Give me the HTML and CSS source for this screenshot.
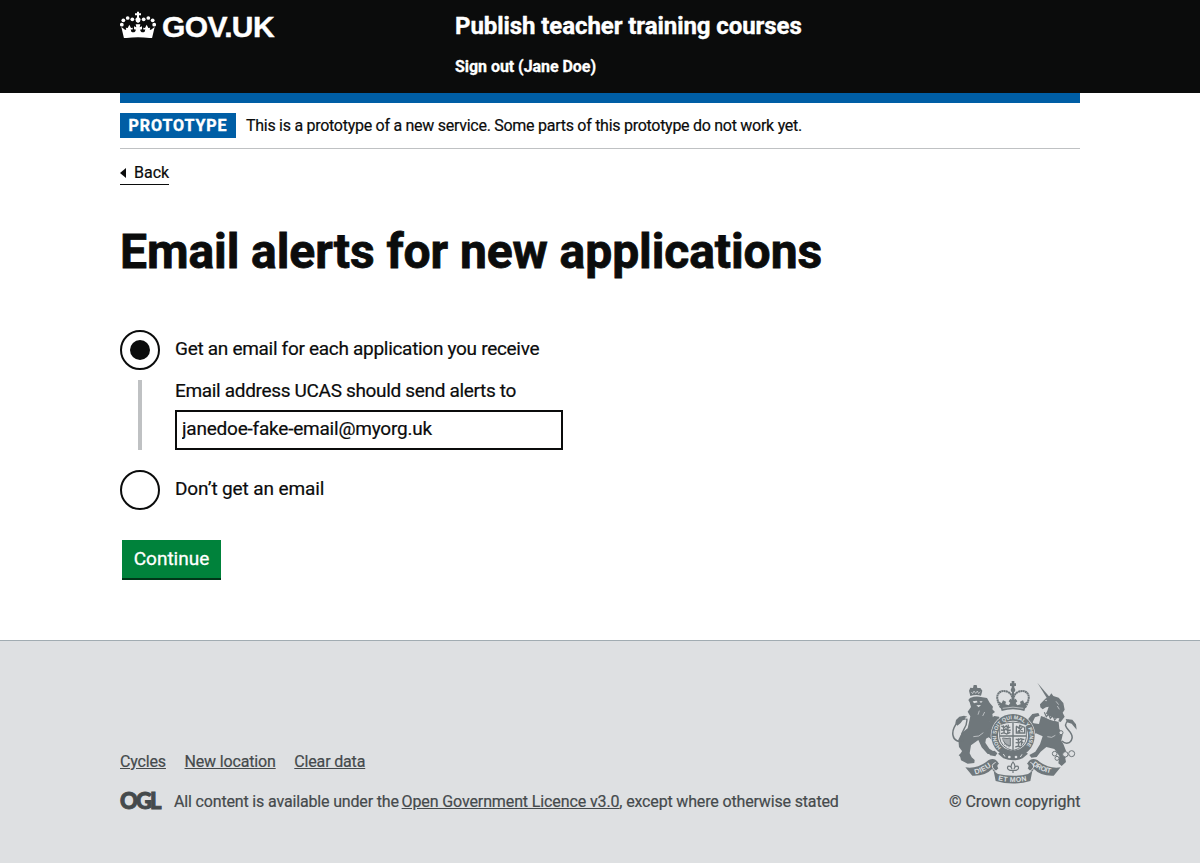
FILE: index.html
```html
<!DOCTYPE html>
<html lang="en">
<head>
<meta charset="utf-8">
<title>Email alerts for new applications</title>
<link rel="stylesheet" href="styles.css">
</head>
<body>
<header class="header">
  <div class="wrap header-grid">
    <a class="logo" href="#">
      <svg class="logo-crown" viewBox="30 35 108 79" aria-hidden="true">
        <defs>
          <g id="crown-half">
            <circle cx="67" cy="59" r="5.6"/><circle cx="53" cy="55" r="5.6"/><circle cx="40" cy="62" r="5.6"/><circle cx="35.5" cy="75" r="5.6"/>
            <path d="M34 82l12 9 3-2-2-5 6 1 5-10 5 10 6-1-2 6-5-1 2 7q6 3 11 0l3-6-6-1v-9l7 3-2-9h7v39q-22 0-42 3z"/>
          </g>
        </defs>
        <g fill="#fff">
          <path d="M81 36h6v5h6v6h-6v6l5 5-2 8-6 4-6-4-2-8 5-5v-6h-6v-6h6z"/>
          <use href="#crown-half"/>
          <use href="#crown-half" transform="translate(168) scale(-1 1)"/>
        </g>
      </svg>
      <span class="logo-text">GOV.UK</span>
    </a>
    <div>
      <a class="service-name" href="#">Publish teacher training courses</a>
      <a class="sign-out" href="#">Sign out (Jane Doe)</a>
    </div>
  </div>
</header>

<main class="wrap main">
  <div class="phase-banner">
    <strong class="phase-tag">PROTOTYPE</strong>
    <span class="phase-text">This is a prototype of a new service. Some parts of this prototype do not work yet.</span>
  </div>
  <a class="back" href="#">Back</a>
  <h1 class="title">Email alerts for new applications</h1>
  <form>
    <label class="radio"><span class="radio-ring radio-on"></span><span class="radio-label label-get">Get an email for each application you receive</span></label>
    <div class="conditional">
      <label class="field-label" for="email">Email address UCAS should send alerts to</label>
      <input class="field" id="email" type="text" value="janedoe-fake-email@myorg.uk">
    </div>
    <label class="radio"><span class="radio-ring"></span><span class="radio-label label-none">Don’t get an email</span></label>
    <button class="button" type="button">Continue</button>
  </form>
</main>

<footer class="footer">
  <div class="wrap footer-grid">
    <div class="footer-meta">
      <nav class="footer-links"><a href="#">Cycles</a><a href="#">New location</a><a href="#">Clear data</a></nav>
      <div class="licence"><span class="ogl">OGL</span><span class="licence-text">All content is available under the <a href="#">Open Government Licence v3.0</a>, except where otherwise stated</span></div>
    </div>
    <div class="copyright">
      <svg class="arms" viewBox="30 30 390 312" aria-hidden="true">
        <defs>
          <path id="motto" d="M185 234A50 50 0 1 1 253 234"/>
          <path id="dieu" d="M106 313Q135 306 160 285"/>
          <path id="mon" d="M174 331Q219 341 264 331"/>
          <path id="droit" d="M276 284Q302 306 338 311"/>
        </defs>
        <g fill="#6f777b">
          <!-- Lion -->
          <path d="M91 78l-4-16 4-9 8 1 2-9h9l2 9 9 0 6 8-4 15q-16-4-32 1z"/>
          <path d="M92 83q17-6 35-1l14 2 8 14 10 12-2 8 8 8-8 6 2 12-10 10 10 10 2 28-6 16-9-6-8 4-2 12 12 18 12 8-1 8h-16l-18-20-10-22-22 16-4 24 6 12 9 8-1 9-20 2-20-10-3-14 6-14-9-12-2-22 10-20 18-14 8-36-8-14 10-14-4-14-4-7 5-6z"/>
          <path d="M145 150l18-12 14 2 4 10-14 6-8 14zM143 178l20-6 10 10-2 28 10 10-3 7-13-2-10-14-10-14z"/>
          <path d="M46 160l2-10 10-10 14-3 10 3-8 4 6 4-12 3-6 8-10 8zM56 256l10-10 12 8-8 14zM144 245l20-3 8 8-6 9-16-3z"/>
          <!-- Unicorn -->
          <path d="M292 38l36 42-7 5z"/>
          <path d="M300 103l16-17 13-9 5-7 6 8 16 5 14 16 4 20-6 9 6 12-12 16-50-16 10-18 4-12-8 2-10 6-7-6z"/>
          <path d="M303 138l53 18 2 20 10 18-4 18 6 10 8 20-4 14 4 20-13 12-10-8 3-22-15-21-24-6-17 14-12 16-16 2-6-8 18-10 14-22 8-24-22-10-12-20-16-4-5-12 14-5 14 12 16 2z"/>
          <path d="M264 148l13-16 18-3 4 8-14 5-8 16zM274 180l24-5 8 8-18 5-10 14-7-8zM377 147l20 2 11 14 2 16-7-8-8-10-14-4z"/>
        </g>
        <g fill="none" stroke="#6f777b" stroke-width="4.5">
          <path d="M56 152c-12 14-20 30-17 44 3 17 18 22 32 14M80 146c6 24-20 38-16 58M386 150c-28 24 16 31 10 55-4 17-20 18-30 8"/>
        </g>
        <path d="M362 262q14 4 24-8" fill="none" stroke="#6f777b" stroke-width="3"/>
        <g fill="#dee0e2" stroke="#6f777b" stroke-width="3">
          <circle cx="344" cy="251" r="7"/><circle cx="351" cy="265" r="6"/><circle cx="363" cy="188" r="6"/><circle cx="376" cy="253" r="8"/><circle cx="395" cy="251" r="9"/>
        </g>
        <path d="M312 126q22 20 46 19l-3 9q-28 0-47-18z" fill="#dee0e2"/>
        <path d="M313 127l6 13 7-8 5 13 8-8 5 13 8-10" fill="none" stroke="#6f777b" stroke-width="3.5"/>
        <path d="M98 94l12-2 3 5-11 3zM118 94l10 0-5 5zM109 106l14-1-7 7zM314 92l7-3-2 5z" fill="#dee0e2"/>
        <path d="M94 66l4 5 4-8 5 7 5-7 4 8 5-6M118 122l-4 12M134 126l-6 12M100 200q18 2 30-12M348 94l8 10M352 108l6 10M322 200q14 6 24-4" fill="none" stroke="#dee0e2" stroke-width="2"/>
        <!-- Crown -->
        <g fill="none" stroke="#6f777b" stroke-width="6">
          <path d="M183 113q-15-25-10-38 8-18 31-9 12 5 14 22M255 113q15-25 10-38-8-18-31-9-12 5-14 22" stroke-dasharray="6 1"/>
          <path d="M219 65v45"/>
        </g>
        <circle cx="219" cy="60" r="7" fill="#6f777b"/>
        <path d="M215 33h8v7h5v8h-5v7h-8v-7h-5v-8h5z" fill="#6f777b"/>
        <path d="M176 94l9 6 4-9 9 4-2 8 10 3 5-7-5-5 5-8 8 4 8-4 5 8-5 5 5 7 10-3-2-8 9-4 4 9 9-6-9 29q-34-10-68 0z" fill="#6f777b"/>
        <path d="M188 115q31-7 62 0" fill="none" stroke="#dee0e2" stroke-width="2"/>
        <!-- Garter and shield -->
        <circle cx="219" cy="197" r="67" fill="#dee0e2"/>
        <circle cx="219" cy="197" r="55" fill="none" stroke="#6f777b" stroke-width="20"/>
        <path d="M179 164q40-15 80 0v38q-2 30-40 40-38-10-40-40z" fill="#dee0e2" stroke="#6f777b" stroke-width="3"/>
        <path d="M219 158v83M179 198h80" stroke="#6f777b" stroke-width="4"/>
        <g fill="none" stroke="#6f777b" stroke-width="4">
          <path d="M184 168l8 5 7-6 4 7 8-3M183 180l10 1 5-5 5 7 9-3M183 191l9-3 8 4 11-5M190 166l3 25M205 164l-2 26"/>
          <path d="M228 168l7 5 7-6 12 5v17h-25v-20M235 173l13 11M247 172l-14 14M239 164v26"/>
          <path d="M188 204q15 3 23 0v24q-21-5-23-24zM195 205v20M201 205v24M207 205v27" stroke-width="3"/>
          <path d="M227 207l8 3 7-4 11 3M227 218l10 1 6-5 7 5M226 231l9-3 8 3M235 205l1 27M246 205l-2 22"/>
        </g>
        <path d="M174 251l12-8q33 15 66 0l12 8-16 14q-29 12-58 0z" fill="#6f777b"/>
        <circle cx="208" cy="261" r="4" fill="#dee0e2"/><circle cx="228" cy="261" r="4" fill="#dee0e2"/><path d="M190 252l5 8M246 253l-5 8" stroke="#dee0e2" stroke-width="3"/>
        <!-- Ribbon -->
        <g fill="#6f777b">
          <path d="M76 292q38 6 70-22 16-8 25 3l6 8q-9 5-2 14l-10 10q-8-2-8-9-22 23-60 21z"/>
          <path d="M362 292q-38 6-70-22-16-8-25 3l-6 8q9 5 2 14l10 10q8-2 8-9 22 23 60 21z"/>
          <path d="M161 303l13 9q45 11 90 0l13-9-6 30q-52 15-104 0z"/>
        </g>
        <path d="M167 277q-19 8-3 24 12 9 18 0M271 277q19 8 3 24-12 9-18 0" fill="none" stroke="#dee0e2" stroke-width="3"/>
        <path d="M219 276q10 12 3 21 4-11 12-8 5 8-6 12h-18q-11-4-6-12 8-3 12 8-7-9 3-21zM219 301v8" fill="none" stroke="#6f777b" stroke-width="3.5"/>
        <g class="arms-text">
          <text font-size="16"><textPath href="#motto" startOffset="1" textLength="228">HONI SOIT QUI MAL Y PENSE</textPath></text>
          <text font-size="22"><textPath href="#dieu" textLength="54">DIEU</textPath></text>
          <text font-size="21"><textPath href="#mon" textLength="87">ET MON</textPath></text>
          <text font-size="21"><textPath href="#droit" textLength="62">DROIT</textPath></text>
        </g>
      </svg>
      <a class="copyright-text" href="#">© Crown copyright</a>
    </div>
  </div>
</footer>
</body>
</html>
```

FILE: styles.css
```css
* { box-sizing: border-box; }
body { margin: 0; background: #fff; color: #0b0c0c; font-family: Roboto, "Liberation Sans", sans-serif; font-size: 16px; line-height: 20px; white-space: nowrap; -webkit-text-stroke: 0.2px; }
a { color: inherit; text-decoration: none; }
.wrap { width: 960px; margin: 0 auto; }

.header { background: #0b0c0c; color: #fff; height: 93px; }
.header-grid { display: grid; grid-template-columns: 335px 1fr; padding-top: 11px; }
.logo { display: flex; align-items: flex-start; gap: 6px; }
.logo-crown { width: 36px; height: 27px; }
.logo-text { font: bold 30px/31px "Liberation Sans", sans-serif; letter-spacing: -0.6px; -webkit-text-stroke: 0.4px; }
.service-name { display: block; font-weight: 700; font-size: 24px; line-height: 30px; letter-spacing: -0.07px; -webkit-text-stroke: 0.4px; }
.sign-out { display: block; margin-top: 16px; font-weight: 700; line-height: 20px; letter-spacing: -0.05px; -webkit-text-stroke: 0.3px; }

.main { height: 547px; border-top: 10px solid #005ea5; }
.phase-banner { display: flex; gap: 10px; padding: 10px 0; border-bottom: 1px solid #bfc1c3; line-height: 25px; }
.phase-tag { width: 116px; background: #005ea5; color: #fff; text-align: center; letter-spacing: 0.95px; -webkit-text-stroke: 0.4px; }
.phase-text { letter-spacing: -0.275px; }
.back { display: flex; align-items: center; gap: 8px; width: 49px; height: 22px; margin-top: 14px; padding-bottom: 1px; border-bottom: 1px solid #0b0c0c; }
.back::before { content: ""; border: 5px solid transparent; border-left: 0; border-right: 6px solid #0b0c0c; }
.title { margin: 42px 0 53px; font-size: 48px; line-height: 50px; font-weight: 700; letter-spacing: -0.08px; -webkit-text-stroke: 0.8px; }

.radio { display: flex; gap: 15px; height: 40px; font-size: 19px; line-height: 25px; }
.radio-label { padding-top: 6px; }
.label-get { letter-spacing: -0.3px; }
.label-none { letter-spacing: -0.12px; }
.radio-ring { display: grid; place-items: center; width: 40px; height: 40px; border: 2px solid #0b0c0c; border-radius: 50%; }
.radio-on::after { content: ""; width: 20px; height: 20px; border-radius: 50%; background: #0b0c0c; }
.conditional { margin: 10px 0 20px 18px; height: 70px; padding-left: 33px; border-left: 4px solid #bfc1c3; font-size: 19px; }
.field-label { display: block; height: 30px; line-height: 21px; letter-spacing: -0.33px; }
.field { display: block; width: 388px; height: 40px; padding: 0 5px 3px; border: 2px solid #0b0c0c; border-radius: 0; background: #fff; color: #0b0c0c; font: 19px Roboto, sans-serif; letter-spacing: -0.22px; }
.button { display: block; width: 99px; height: 40px; margin: 30px 0 0 2px; padding: 0 0 2px; border: 0; border-bottom: 2px solid #003618; background: #00823b; color: #fff; font: 19px Roboto, sans-serif; -webkit-text-stroke: 0.3px; }

.footer { height: 223px; background: #dee0e2; border-top: 1px solid #a1acb2; color: #454a4c; }
.footer-grid { display: flex; justify-content: space-between; padding-top: 39px; }
.footer-meta { padding-top: 72px; letter-spacing: -0.16px; }
.footer-meta a { text-decoration: underline; }
.footer-links { display: flex; gap: 18.6px; }
.licence { display: flex; margin-top: 20px; }
.licence-text a { letter-spacing: -0.12px; margin-left: -1px; }
.ogl { width: 54px; font: 900 22px/18px Lato, sans-serif; letter-spacing: -1.9px; -webkit-text-stroke: 1px; }
.copyright { width: 131px; }
.arms { display: block; width: 130px; height: 104px; margin-left: 1px; }
.copyright-text { display: block; margin-top: 8px; letter-spacing: -0.07px; }
.arms-text { fill: #dee0e2; font-family: "Liberation Sans", sans-serif; font-weight: 700; -webkit-text-stroke: 0; }
```
